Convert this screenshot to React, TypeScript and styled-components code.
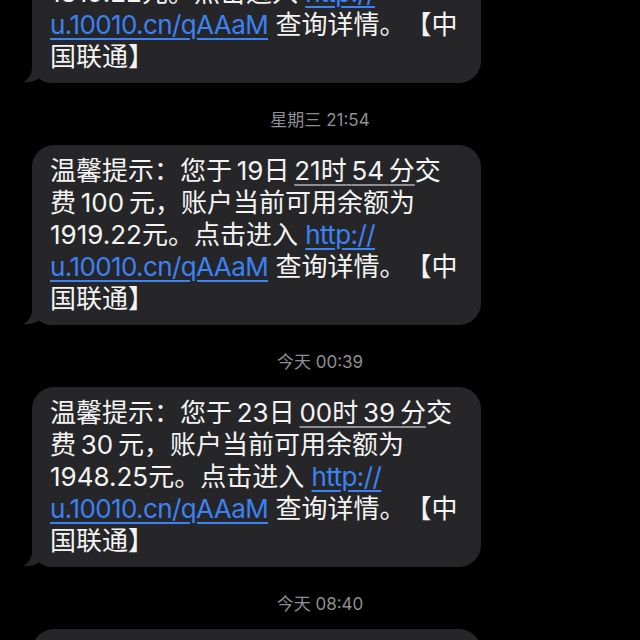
import React from 'react';
import styled, { createGlobalStyle } from 'styled-components';

interface Notice {
  stamp?: string
  day: string
  hour: string
  minute: string
  amount: string
  balance: string
}

// 只截到了中间一段：第一条顶部和最后一条底部都在屏幕外
const notices: Notice[] = [
  { day: '18', hour: '10', minute: '25', amount: '50', balance: '1819.22' },
  { stamp: '星期三 21:54', day: '19', hour: '21', minute: '54', amount: '100', balance: '1919.22' },
  { stamp: '今天 00:39', day: '23', hour: '00', minute: '39', amount: '30', balance: '1948.25' },
  { stamp: '今天 08:40', day: '23', hour: '08', minute: '40', amount: '50', balance: '1998.25' },
]

const thin = '\u2009'

const Tail = () => (
  <TailShape viewBox='0 0 40 30' width='40' height='30'>
    <path d='M12 0 L12 14 C12 21 9 26 3 29.2 C9 29.8 15 28.2 19 25.5 C22.5 28.3 26.5 30 32 30 L40 30 L40 0 Z' />
  </TailShape>
)

const App = () => {
  return (
    <>
      <GlobalStyle />
      <Thread>
        {notices.map((n, i) => (
          <React.Fragment key={i}>
            {n.stamp && <Stamp>{n.stamp}</Stamp>}
            <Bubble>
              <Tail />
              温馨提示：您于{thin}{n.day}日{thin}
              <TimeMark>{n.hour}时{thin}{n.minute}{thin}分</TimeMark>交<br />
              费{thin}{n.amount}{thin}元，账户当前可用余额为<br />
              {n.balance}元。点击进入 <Link>http://</Link><br />
              <Link>u.10010.cn/qAAaM</Link> 查询详情。【中<br />
              国联通】
            </Bubble>
          </React.Fragment>
        ))}
      </Thread>
    </>
  );
};

const GlobalStyle = createGlobalStyle`
  html, body {
    margin: 0;
    background: #000;
    overflow: hidden;
  }
  body {
    font-family: Inter, "Noto Sans CJK SC", sans-serif;
  }
`
const Thread = styled.main`
  display: flex;
  flex-direction: column;
  align-items: flex-start;
  padding-left: 32px;
  margin-top: -97px;
`
const Stamp = styled.div`
  align-self: stretch;
  margin: 27px 0 15px -32px;
  height: 20px;
  line-height: 20px;
  text-align: center;
  font-size: 17px;
  color: #8e8e93;
`
const Bubble = styled.div`
  position: relative;
  isolation: isolate;
  box-sizing: border-box;
  width: 449px;
  padding: 10px 18px;
  border-radius: 22px;
  background: #262628;
  color: #f4f4f4;
  font-size: 26px;
  line-height: 32px;
  white-space: nowrap;
  text-spacing-trim: space-all;
`
const TimeMark = styled.span`
  text-decoration: underline;
  text-decoration-color: #8e8e93;
  text-decoration-thickness: 1.5px;
  text-underline-offset: 4px;
`
const Link = styled.span`
  color: #3b82f4;
  letter-spacing: -0.6px;
  text-decoration: underline;
  text-decoration-thickness: 1.5px;
  text-underline-offset: 4px;
`
const TailShape = styled.svg`
  position: absolute;
  z-index: -1;
  left: -12px;
  bottom: 0;
  fill: #262628;
`

export default App;
